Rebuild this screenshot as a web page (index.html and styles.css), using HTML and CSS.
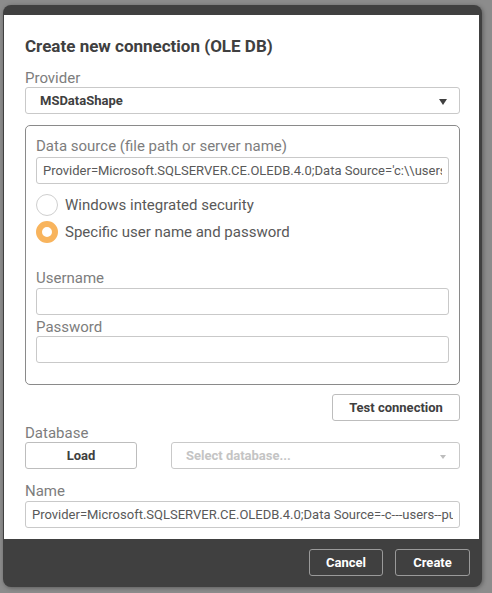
FILE: index.html
```html
<!DOCTYPE html>
<html>
<head>
<meta charset="utf-8">
<link rel="stylesheet" href="styles.css">
</head>
<body>
<div class="dialog">
  <div class="content">
    <h1 class="title">Create new connection (OLE DB)</h1>
    <div class="label first">Provider</div>
    <div class="select"><span class="select-text">MSDataShape</span><span class="arrow"></span></div>

    <div class="group">
      <div class="label">Data source (file path or server name)</div>
      <input class="field" type="text" readonly value="Provider=Microsoft.SQLSERVER.CE.OLEDB.4.0;Data Source='c:\\users\\public\\documents\\data.sdf'">
      <div class="radios">
        <div class="radio-row"><span class="radio"></span><span class="radio-label">Windows integrated security</span></div>
        <div class="radio-row"><span class="radio checked"></span><span class="radio-label">Specific user name and password</span></div>
      </div>
      <div class="label user">Username</div>
      <input class="field" type="text" readonly value="">
      <div class="label pass">Password</div>
      <input class="field" type="password" readonly value="">
    </div>

    <div class="test-row"><button class="btn test">Test connection</button></div>

    <div class="label db">Database</div>
    <div class="db-row">
      <button class="btn load">Load</button>
      <div class="select db-select"><span class="placeholder">Select database...</span><span class="arrow light"></span></div>
    </div>

    <div class="label name">Name</div>
    <input class="field name-field" type="text" readonly value="Provider=Microsoft.SQLSERVER.CE.OLEDB.4.0;Data Source=-c---users--public--documents--data.sdf-">
  </div>
  <div class="footer">
    <button class="fbtn">Cancel</button>
    <button class="fbtn">Create</button>
  </div>
</div>
</body>
</html>
```

FILE: styles.css
```css
* { box-sizing: border-box; }
html, body { margin: 0; padding: 0; }
body {
  background: #8c8c8c;
  font-family: Roboto, "Liberation Sans", sans-serif;
  width: 492px;
  height: 593px;
  overflow: hidden;
}
.dialog {
  margin: 5px 0 0 3px;
  width: 479px;
  background: #404040;
  border-radius: 8px;
  padding: 10px 3px 0 1px;
  box-shadow: 1px 1px 4px rgba(0,0,0,0.35);
}
.content {
  background: #fff;
  height: 524px;
  padding: 21px 19px 0 21px;
}
.title {
  margin: 0;
  font-size: 17px;
  line-height: 21px;
  font-weight: 700;
  color: #404040;
}
.label {
  font-size: 15px;
  line-height: 18px;
  color: #7d7d7d;
}
.label.first { margin-top: 12px; }
.select {
  position: relative;
  height: 27px;
  border: 1px solid #c9c9c9;
  border-radius: 3px;
  display: flex;
  align-items: center;
  padding-left: 14px;
}
.select-text {
  font-size: 13px;
  font-weight: 700;
  color: #404040;
}
.placeholder {
  font-size: 13px;
  font-weight: 700;
  color: #c4c4c4;
}
.arrow {
  position: absolute;
  right: 12px;
  top: 11px;
  width: 0;
  height: 0;
  border-left: 4.5px solid transparent;
  border-right: 4.5px solid transparent;
  border-top: 6px solid #404040;
}
.arrow.light {
  border-left-width: 3.5px;
  border-right-width: 3.5px;
  border-top: 4px solid #bdbdbd;
  right: 13px;
  top: 12px;
}
.group {
  margin-top: 11px;
  border: 1px solid #8a8a8a;
  border-radius: 5px;
  padding: 11px 10px 21px 10px;
}
.field {
  display: block;
  width: 100%;
  height: 27px;
  margin: 2px 0 0 0;
  border: 1px solid #c9c9c9;
  border-radius: 3px;
  padding: 0 6px;
  font-family: Roboto, "Liberation Sans", sans-serif;
  font-size: 13px;
  color: #595959;
  background: #fff;
  outline: none;
}
.radios { margin-top: 7px; }
.radio-row {
  height: 27px;
  display: flex;
  align-items: center;
}
.radio {
  width: 22px;
  height: 22px;
  border-radius: 50%;
  border: 1px solid #cfcfcf;
  background: #fff;
  flex: none;
}
.radio.checked {
  border: 6.5px solid #f8b45d;
}
.radio-label {
  margin-left: 7px;
  font-size: 15px;
  color: #595959;
}
.label.user { margin-top: 24px; }
.label.pass { margin-top: 3px; }
.group .label.user + .field { margin-top: 1px; }
.group .label.pass + .field { margin-top: 0; }
.test-row {
  display: flex;
  justify-content: flex-end;
  margin-top: 9px;
}
.btn {
  height: 27px;
  background: #fff;
  border: 1px solid #bdbdbd;
  border-radius: 3px;
  font-family: Roboto, "Liberation Sans", sans-serif;
  font-size: 13px;
  font-weight: 700;
  color: #404040;
  padding: 0;
}
.btn.test { width: 128px; }
.label.db { margin-top: 3px; }
.db-row {
  display: flex;
  gap: 34px;
}
.btn.load { width: 112px; flex: none; }
.db-select { flex: 1; }
.label.name { margin-top: 13px; }
.name-field { margin-top: 1px; }
.footer {
  height: 48px;
  display: flex;
  justify-content: flex-end;
  align-items: center;
  gap: 12px;
  padding-right: 9px;
  padding-bottom: 1px;
}
.fbtn {
  height: 27px;
  width: 74px;
  background: transparent;
  border: 1px solid #9a9a9a;
  border-radius: 3px;
  color: #fff;
  font-family: Roboto, "Liberation Sans", sans-serif;
  font-size: 13px;
  font-weight: 700;
  padding: 0;
}
.fbtn + .fbtn { width: 75px; }
```
